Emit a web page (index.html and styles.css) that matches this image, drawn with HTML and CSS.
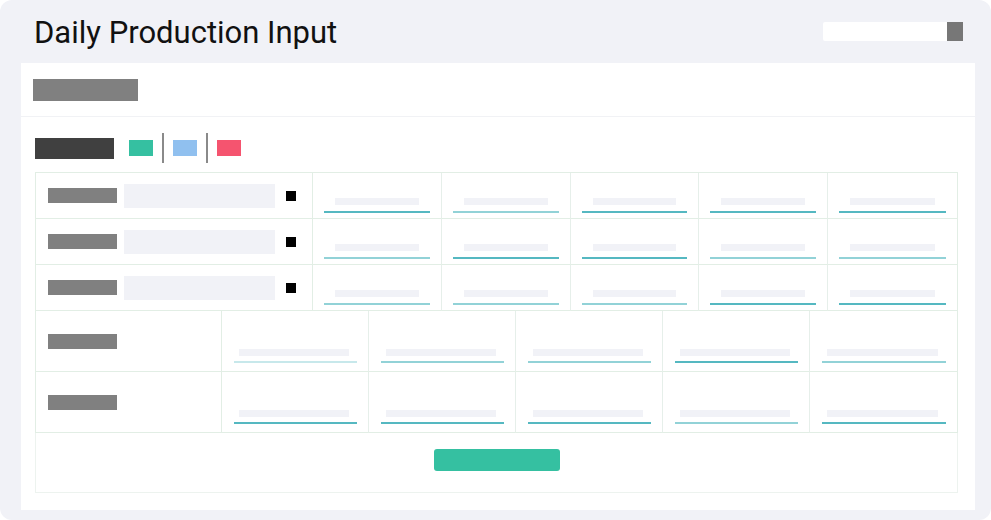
FILE: index.html
```html
<!DOCTYPE html>
<html lang="en">
<head>
<meta charset="utf-8">
<title>Daily Production Input</title>
<link rel="stylesheet" href="styles.css">
</head>
<body>
<div class="frame">
  <div class="topbar">
    <h1 class="title">Daily Production Input</h1>
    <div class="toggle"><span class="toggle-track"></span><span class="toggle-knob"></span></div>
  </div>
  <div class="panel">
    <div class="panel-head"><span class="ph-label"></span></div>
    <div class="legend">
      <span class="lg-dark"></span>
      <span class="lg-sw teal"></span>
      <span class="lg-sep"></span>
      <span class="lg-sw blue"></span>
      <span class="lg-sep"></span>
      <span class="lg-sw red"></span>
    </div>
    <div class="table">
      <div class="grid-top">
        <div class="lead"><span class="lbl"></span><span class="inp"></span><span class="sq"></span></div>
        <div class="cell"><span class="ph"></span><span class="ul d"></span></div>
        <div class="cell"><span class="ph"></span><span class="ul l"></span></div>
        <div class="cell"><span class="ph"></span><span class="ul d"></span></div>
        <div class="cell"><span class="ph"></span><span class="ul d"></span></div>
        <div class="cell"><span class="ph"></span><span class="ul d"></span></div>

        <div class="lead"><span class="lbl"></span><span class="inp"></span><span class="sq"></span></div>
        <div class="cell"><span class="ph"></span><span class="ul l"></span></div>
        <div class="cell"><span class="ph"></span><span class="ul d"></span></div>
        <div class="cell"><span class="ph"></span><span class="ul d"></span></div>
        <div class="cell"><span class="ph"></span><span class="ul l"></span></div>
        <div class="cell"><span class="ph"></span><span class="ul l"></span></div>

        <div class="lead"><span class="lbl"></span><span class="inp"></span><span class="sq"></span></div>
        <div class="cell"><span class="ph"></span><span class="ul l"></span></div>
        <div class="cell"><span class="ph"></span><span class="ul l"></span></div>
        <div class="cell"><span class="ph"></span><span class="ul l"></span></div>
        <div class="cell"><span class="ph"></span><span class="ul d"></span></div>
        <div class="cell"><span class="ph"></span><span class="ul d"></span></div>
      </div>
      <div class="grid-bot">
        <div class="lead2"><span class="lbl"></span></div>
        <div class="cell2"><span class="ph"></span><span class="ul xl"></span></div>
        <div class="cell2"><span class="ph"></span><span class="ul l"></span></div>
        <div class="cell2"><span class="ph"></span><span class="ul l"></span></div>
        <div class="cell2"><span class="ph"></span><span class="ul d"></span></div>
        <div class="cell2"><span class="ph"></span><span class="ul l"></span></div>

        <div class="lead2"><span class="lbl"></span></div>
        <div class="cell2"><span class="ph"></span><span class="ul d"></span></div>
        <div class="cell2"><span class="ph"></span><span class="ul d"></span></div>
        <div class="cell2"><span class="ph"></span><span class="ul d"></span></div>
        <div class="cell2"><span class="ph"></span><span class="ul l"></span></div>
        <div class="cell2"><span class="ph"></span><span class="ul d"></span></div>
      </div>
      <div class="foot"><span class="btn"></span></div>
    </div>
  </div>
</div>
</body>
</html>
```
FILE: styles.css
```css
* { box-sizing: border-box; }
html, body { margin: 0; padding: 0; background: #ffffff; }
body { font-family: Roboto, "Liberation Sans", sans-serif; }

.frame {
  width: 991px;
  height: 520px;
  background: #f1f2f7;
  border-radius: 12px;
  padding: 0 16px 10px 21px;
  display: flex;
  flex-direction: column;
}

.topbar {
  height: 63px;
  flex: none;
  display: flex;
  align-items: center;
  justify-content: space-between;
}
.title {
  margin: 0 0 0 13px;
  padding-top: 2px;
  font-size: 31px;
  font-weight: 400;
  color: #111111;
  letter-spacing: 0;
}
.toggle {
  display: flex;
  margin-right: 12px;
  height: 19px;
}
.toggle-track {
  width: 124px;
  background: #ffffff;
  border-radius: 2px 0 0 2px;
}
.toggle-knob {
  width: 16px;
  background: #777777;
}

.panel {
  flex: 1;
  background: #ffffff;
  display: flex;
  flex-direction: column;
}
.panel-head {
  height: 54px;
  flex: none;
  border-bottom: 1px solid #f1f2f5;
  padding-left: 12px;
  display: flex;
  align-items: center;
}
.ph-label {
  width: 105px;
  height: 22px;
  background: #808080;
}

.legend {
  margin: 16px 0 0 14px;
  height: 30px;
  display: flex;
  align-items: center;
}
.lg-dark {
  width: 79px;
  height: 21px;
  background: #404040;
  margin-right: 15px;
}
.lg-sw {
  width: 24px;
  height: 16px;
}
.lg-sw.teal { background: #35c0a1; }
.lg-sw.blue { background: #90c0ef; }
.lg-sw.red { background: #f5546f; }
.lg-sep {
  width: 2px;
  height: 30px;
  background: #8a8a8a;
  margin: 0 9px;
}

.table {
  margin: 9px 17px 0 14px;
}
.grid-top {
  display: grid;
  grid-template-columns: 277px repeat(5, 1fr);
  grid-auto-rows: 46px;
  border: 1px solid #e2eee5;
  border-bottom: none;
}
.grid-bot {
  display: grid;
  grid-template-columns: 186px repeat(5, 1fr);
  grid-auto-rows: 61px;
  border-left: 1px solid #e2eee5;
  border-right: 1px solid #e2eee5;
}
.lead, .cell, .lead2, .cell2 {
  border-bottom: 1px solid #e2eee5;
}
.lead, .lead2 {
  border-right: 1px solid #e2eee5;
  display: flex;
  align-items: center;
  padding-left: 12px;
}
.cell, .cell2 {
  border-right: 1px solid #e6efea;
  display: flex;
  flex-direction: column;
  justify-content: flex-end;
}
.cell:nth-child(6n), .cell2:nth-child(6n) { border-right: none; }

.lbl {
  width: 69px;
  height: 15px;
  background: #808080;
}
.inp {
  width: 151px;
  height: 24px;
  background: #f1f2f7;
  margin-left: 7px;
}
.sq {
  width: 10px;
  height: 10px;
  background: #000000;
  margin-left: 11px;
}

.cell { padding: 0 11px 5px; }
.cell .ph {
  height: 7px;
  margin: 0 11px 6px;
  background: #f1f2f7;
}
.cell2 { padding: 0 11px 8px 12px; }
.cell2 .ph {
  height: 7px;
  margin: 0 8px 5px 5px;
  background: #f1f2f7;
}
.ul { height: 2px; }
.ul.d { background: #55b8c1; }
.ul.l { background: #92d2d7; }
.ul.xl { background: #c7e8eb; }

.foot {
  height: 60px;
  border: 1px solid #edf3ef;
  border-top: none;
  display: flex;
  justify-content: center;
  padding-top: 16px;
}
.btn {
  width: 126px;
  height: 22px;
  background: #35c0a1;
  border-radius: 3px;
}
```
